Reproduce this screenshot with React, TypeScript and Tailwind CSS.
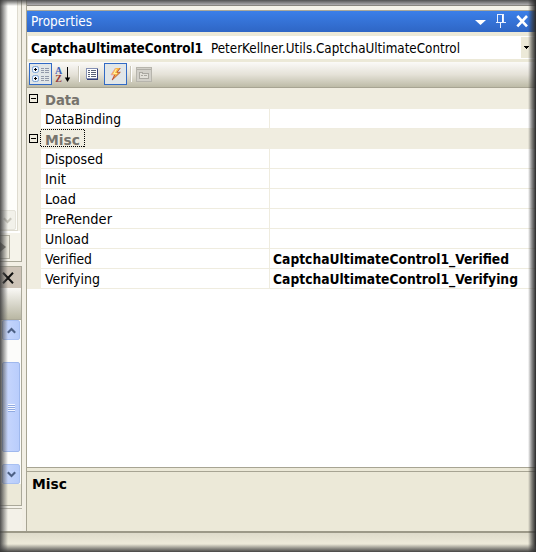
import React from "react";

type TextProps = { text: string; width: number; bold?: boolean; size?: number; color?: string };

// Single line of UI text fitted to a fixed advance width.
function Label({ text, width, bold = false, size = 14, color = "#000" }: TextProps) {
  return (
    <svg width={width + 4} height="20" className="block shrink-0 overflow-visible">
      <text
        x="0"
        y="15"
        textLength={width}
        lengthAdjust="spacingAndGlyphs"
        fill={color}
        fontSize={size}
        fontWeight={bold ? 700 : 400}
        fontFamily='"DejaVu Sans Condensed", "Noto Sans", sans-serif'
      >
        {text}
      </text>
    </svg>
  );
}

function Expander() {
  return (
    <svg width="9" height="9" className="mt-[5px] ml-[2px] shrink-0" shapeRendering="crispEdges">
      <path d="M.5 .5h8v8h-8zM2 4.5h5" fill="none" stroke="#000" />
    </svg>
  );
}

function Category({ text, width, focused }: { text: string; width: number; focused?: boolean }) {
  return (
    <div className="flex h-[20px] bg-[#f0ede0]">
      <Expander />
      <div className="relative mt-px ml-[7px]">
        <Label text={text} width={width} bold color="#77746d" />
        {focused && (
          <svg width="46" height="19" className="absolute -top-px -left-[5px]" shapeRendering="crispEdges">
            <rect x=".5" y=".5" width="44" height="17" fill="none" stroke="#000" strokeDasharray="1 1" />
          </svg>
        )}
      </div>
    </div>
  );
}

function Row({ text, width, value, valueWidth = 0 }: { text: string; width: number; value?: string; valueWidth?: number }) {
  return (
    <div className="flex h-[20px] bg-[#f0ede0]">
      <div className="ml-[14px] flex w-[229px] shrink-0 border-r border-b border-[#efecdf] bg-white pl-[4px]">
        <Label text={text} width={width} />
      </div>
      <div className="flex flex-1 border-b border-[#efecdf] bg-white pl-[3px]">
        {value && <Label text={value} width={valueWidth} bold />}
      </div>
    </div>
  );
}

function Chevron({ up, disabled }: { up?: boolean; disabled?: boolean }) {
  return (
    <div
      className={
        "flex h-[20px] w-[18px] shrink-0 items-center justify-center rounded-[2px] border " +
        (disabled ? "-ml-[2px] border-[#e5e3da] bg-[#f2f1ea]" : "border-[#a9c1f2] bg-gradient-to-r from-[#c9d8fc] to-[#b6ccfa]")
      }
    >
      <svg width="9" height="7" className={up ? "rotate-180" : ""}>
        <path d="M.8 1.2L4.5 5l3.7-3.8" fill="none" stroke={disabled ? "#c8c6bc" : "#4d6185"} strokeWidth="2.1" />
      </svg>
    </div>
  );
}

function GroupIcon() {
  return (
    <svg width="17" height="17" viewBox="0 0 17 17">
      {[0, 9].map((y) => (
        <g key={y}>
          <rect x=".5" y={y + 0.5} width="6" height="6" rx="1.8" fill="#eef5ff" stroke="#7da3d2" />
          <path d={`M2 ${y + 3.5}h3M3.5 ${y + 2}v3`} stroke="#000" />
        </g>
      ))}
      <path
        d="M9 2.5h3m1 0h4M9 4.5h3m1 0h4M9 6.5h3m1 0h4M9 10.5h3m1 0h4M9 12.5h3m1 0h4M9 14.5h3m1 0h4"
        stroke="#9299aa"
        shapeRendering="crispEdges"
      />
    </svg>
  );
}

function SortIcon() {
  return (
    <svg width="16" height="17" viewBox="0 0 16 17">
      <text x="0" y="8" fontSize="10" fontWeight="700" fontFamily="Liberation Serif, serif" fill="#4160b5">A</text>
      <text x="0.3" y="16.2" fontSize="10" fontWeight="700" fontFamily="Liberation Serif, serif" fill="#983c3c">Z</text>
      <path d="M12.5 1v12" stroke="#000" />
      <path d="M9.8 11.5h5.4L12.5 16z" fill="#000" />
    </svg>
  );
}

function PropertiesIcon() {
  return (
    <svg width="13" height="12" shapeRendering="crispEdges">
      <rect x=".5" y=".5" width="11" height="10" fill="#fff" stroke="#8490b4" />
      <path d="M11.5 1v11M1 11.5h11" stroke="#38427a" />
      <path d="M2 2.5h2M2 4.5h2M2 6.5h2M2 8.5h2M5 2.5h5M5 4.5h5M5 6.5h5M5 8.5h5" stroke="#586078" />
    </svg>
  );
}

function BoltIcon() {
  return (
    <svg width="12" height="14" viewBox="0 0 12 14">
      <path d="M5.5 1h5L7.3 5.2h3.2L2.2 13l2-5.2H1z" fill="#f7b545" />
      <path d="M5.5 1L1 7.8h3.2L2.2 13" fill="none" stroke="#eda29a" strokeWidth=".9" />
      <path d="M10.3 1L7 5.3h3.3L2.2 13l2.6-5" fill="none" stroke="#b75336" strokeWidth=".9" />
      <path d="M6.4 2L4 6.5h3" fill="none" stroke="#fff19a" strokeWidth="1.2" />
    </svg>
  );
}

function PagesIcon() {
  return (
    <svg width="16" height="15" shapeRendering="crispEdges">
      <rect x=".5" y=".5" width="15" height="14" fill="#d2d0c9" stroke="#b7b5ad" />
      <path d="M1 2.5h14" stroke="#b0aea7" />
      <path d="M3.5 5.5h3v1h6v5h-9zM5 8.5h2m1 0h3" fill="#e2e0d9" stroke="#aaa8a1" />
    </svg>
  );
}

function LeftDock() {
  return (
    <div className="flex h-full w-[22px] shrink-0 flex-col">
      <div className="h-[261px] border-r border-[#aaa899] bg-[#f5f3ea]">
        <div className="flex h-[231px] w-[18px] flex-col justify-end border-r border-b border-[#dedbcf] bg-[#fefefb]">
          <Chevron disabled />
        </div>
        <div className="h-[2px] w-[20px] border-r border-white bg-white" />
        <div className="mt-[2px] flex h-[24px] w-[10px] items-center border border-l-0 border-[#b5b2a4] bg-[#eeebde]">
          <svg width="7" height="10"><path d="M0 0l6 5-6 5z" fill="#7d7a70" /></svg>
        </div>
      </div>
      <div className="h-[5px] border-t border-[#aaa899] bg-[#f2efe5]" />
      <div className="flex h-[22px] items-center justify-center border-t border-r border-[#aaa899] bg-[#cdc3b7] pr-[2px]">
        <svg width="12" height="12" className="ml-[-6px] shrink-0 overflow-visible">
          <path d="M2 .8l10 10.4M12 .8l-10 10.4" stroke="#111" strokeWidth="2" />
        </svg>
      </div>
      <div className="h-[32px] border-r border-b border-[#aaa899] bg-gradient-to-b from-[#faf9f6] to-[#b9b7a3]" />
      <div className="flex h-[164px] flex-col border-r border-[#aaa899] bg-[#fcfcfa] pl-[2px]">
        <Chevron up />
        <div className="mt-[22px] flex h-[90px] w-[18px] flex-col items-center justify-center gap-px rounded-[2px] border border-[#9fb8ed] bg-gradient-to-r from-[#cad8fd] to-[#b9cdfc]">
          {[0, 1, 2, 3].map((n) => <div key={n} className="h-px w-[7px] border-t border-[#f3f6ff] shadow-[0_1px_#90aae1]" />)}
        </div>
        <div className="mt-[12px]"><Chevron /></div>
      </div>
      <div className="h-[22px] border-r border-b border-[#aaa899] bg-[#ece9d8]" />
      <div className="h-[3px] border-b border-[#b7b4a7] bg-[#f5f3ea]" />
      <div className="flex-1 bg-[#f3f1e8]" />
    </div>
  );
}

function PropertiesPanel() {
  return (
    <div className="flex min-w-0 flex-1 flex-col border-l border-[#a7a493] bg-white">
      <div className="h-[11px] shrink-0 border-b border-[#aaa899] bg-[#f5f2e8]">
        <div className="h-[6px] border-b border-[#8e8b84] bg-[#c4c2c4]" />
      </div>
      <div className="flex h-[21px] shrink-0 items-start bg-gradient-to-b from-[#3b7fe8] to-[#2f66c5] pl-[4px]">
        <Label text="Properties" width={61} color="#fff" />
        <svg width="54" height="14" className="mt-[3px] mr-[7px] ml-auto">
          <path d="M0 6h11L5.5 11z" fill="#fff" />
          <path d="M20.5 8.5h10M22.5 8.5v-8h6v8M25.5 9v4.5" fill="none" stroke="#e7efff" shapeRendering="crispEdges" />
          <path d="M27.5 1v7" stroke="#fff" />
          <path d="M42.3 2l9.7 10.4M52 2l-9.7 10.4" stroke="#fff" strokeWidth="2.6" />
        </svg>
      </div>
      <div className="h-[30px] shrink-0 bg-[#ece9d8] pt-[4px] pl-px">
        <div className="flex h-[23px] bg-white pt-[2px] pl-[3px]">
          <Label text="CaptchaUltimateControl1" width={172} bold />
          <div className="ml-[4px]"><Label text="PeterKellner.Utils.CaptchaUltimateControl" width={249} /></div>
          <div className="mt-[-1px] ml-auto flex h-[21px] w-[15px] items-center justify-center bg-[#ece9d8] pr-[5px]">
            <svg width="5" height="3" shapeRendering="crispEdges"><path d="M0 0h5L2.5 3z" /></svg>
          </div>
        </div>
      </div>
      <div className="flex h-[26px] shrink-0 items-center border-b border-[#a7a493] bg-gradient-to-b from-[#fbfaf8] via-[#e5e2d8] to-[#bdbba7] pb-px pl-[2px]">
        <div className="flex h-[22px] w-[23px] items-center justify-center border border-[#316ac5] bg-[#e1e6e8]"><GroupIcon /></div>
        <div className="ml-[3px] w-[16px]"><SortIcon /></div>
        <div className="ml-[7px] h-[16px] w-[2px] border-r border-white bg-[#c9c6b8]" />
        <div className="ml-[6px]"><PropertiesIcon /></div>
        <div className="ml-[5px] flex h-[22px] w-[23px] items-center justify-center border border-[#316ac5] bg-[#e1e6e8]"><BoltIcon /></div>
        <div className="ml-[3px] h-[16px] w-[2px] border-r border-white bg-[#c9c6b8]" />
        <div className="ml-[4px]"><PagesIcon /></div>
      </div>
      <div className="h-[380px] shrink-0 border-b border-[#a7a493]">
        <div className="h-px bg-[#f0ede0]" />
        <Category text="Data" width={35} />
        <Row text="DataBinding" width={76} />
        <Category text="Misc" width={35} focused />
        <Row text="Disposed" width={58} />
        <Row text="Init" width={21} />
        <Row text="Load" width={31} />
        <Row text="PreRender" width={67} />
        <Row text="Unload" width={44} />
        <Row text="Verified" width={47} value="CaptchaUltimateControl1_Verified" valueWidth={236} />
        <Row text="Verifying" width={55} value="CaptchaUltimateControl1_Verifying" valueWidth={245} />
      </div>
      <div className="h-[4px] shrink-0 border-b border-[#a7a493] bg-[#ece9d8]" />
      <div className="flex-1 bg-[#ece9d8] pt-[2px] pl-[5px]">
        <Label text="Misc" width={35} bold />
      </div>
    </div>
  );
}

// Dark fade around the window's outer edges.
function EdgeShade() {
  return (
    <div className="pointer-events-none absolute inset-0">
      <div className="absolute inset-x-0 top-0 h-[6px] bg-gradient-to-b from-[#3d3d3d]/85 to-transparent" />
      <div className="absolute inset-y-0 left-0 w-[8px] bg-gradient-to-r from-[#3d3d3d]/90 via-[#555]/50 to-transparent" />
      <div className="absolute inset-y-0 right-0 w-[8px] bg-gradient-to-l from-[#292929] via-[#333]/60 to-transparent" />
      <div className="absolute inset-x-0 bottom-0 h-[8px] bg-gradient-to-t from-[#333]/90 via-[#444]/50 to-transparent" />
    </div>
  );
}

export default function App() {
  return (
    <div className="relative flex h-[552px] w-[536px] flex-col overflow-hidden bg-[#ece9d8]">
      <div className="flex h-[531px] shrink-0">
        <LeftDock />
        <div className="w-[4px] shrink-0 bg-[#f2efe5]" />
        <PropertiesPanel />
      </div>
      <div className="h-[2px] bg-[#9c9988]" />
      <div className="flex-1 bg-gradient-to-b from-[#dedbcb] via-[#ece9d8] to-[#ece9d8]" />
      <EdgeShade />
    </div>
  );
}
